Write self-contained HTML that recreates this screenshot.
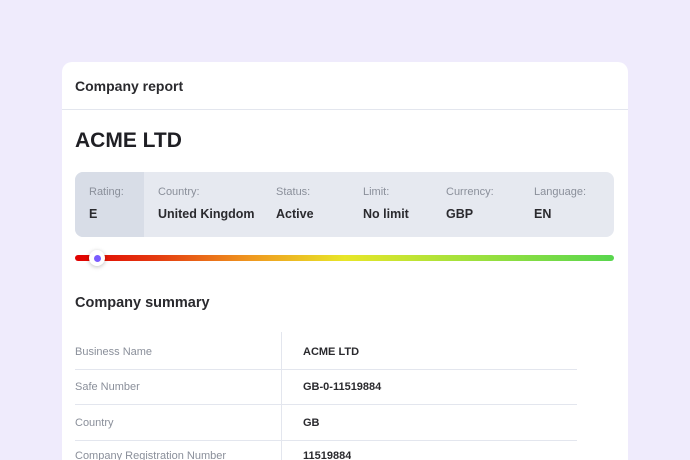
<!DOCTYPE html><html><head><style>
*{margin:0;padding:0;box-sizing:border-box}
html,body{width:690px;height:460px;overflow:hidden}
body{background:#efebfc;font-family:"Liberation Sans",sans-serif;position:relative;color:#222}
.card{position:absolute;left:62px;top:62px;width:566px;height:398px;background:#fff;border-radius:10px 10px 0 0;overflow:hidden}
.abs{position:absolute;white-space:nowrap}
.lbl{font-size:11px;color:#8a8f9a}
.val{font-size:12.5px;font-weight:bold;color:#2a2a2e}
.tl{font-size:11px;color:#8a8f9a}
.tv{font-size:11px;font-weight:bold;color:#2a2a2e}
</style></head><body>
<div class="card">
<div class="abs" style="left:13px;top:16px;font-size:14px;font-weight:bold;color:#2a2a2e">Company report</div>
<div class="abs" style="left:0;top:47px;width:566px;height:1px;background:#e3e6ee"></div>
<div class="abs" style="left:13px;top:67px;font-size:21px;font-weight:bold;color:#1f1f24">ACME LTD</div>
<div class="abs" style="left:13px;top:110px;width:539px;height:65px;background:#e6e9f0;border-radius:8px;overflow:hidden">
<div style="position:absolute;left:0;top:0;width:69px;height:65px;background:#d8dde7"></div>
</div>
<div class="abs lbl" style="left:27px;top:124px">Rating:</div><div class="abs val" style="left:27px;top:145px">E</div>
<div class="abs lbl" style="left:96px;top:124px">Country:</div><div class="abs val" style="left:96px;top:145px">United Kingdom</div>
<div class="abs lbl" style="left:214px;top:124px">Status:</div><div class="abs val" style="left:214px;top:145px">Active</div>
<div class="abs lbl" style="left:301px;top:124px">Limit:</div><div class="abs val" style="left:301px;top:145px">No limit</div>
<div class="abs lbl" style="left:384px;top:124px">Currency:</div><div class="abs val" style="left:384px;top:145px">GBP</div>
<div class="abs lbl" style="left:472px;top:124px">Language:</div><div class="abs val" style="left:472px;top:145px">EN</div>
<div class="abs" style="left:13px;top:193px;width:539px;height:6px;border-radius:3px;background:linear-gradient(90deg,#e10000 0%,#e43a10 15%,#ef9a20 33%,#e8e628 50%,#a9e23a 70%,#58d64e 100%)"></div>
<div class="abs" style="left:27px;top:188px;width:16px;height:16px;border-radius:50%;background:#fff;box-shadow:0 1px 4px rgba(0,0,0,.25)"></div>
<div class="abs" style="left:32px;top:193px;width:7px;height:7px;border-radius:50%;background:#7a5cff"></div>
<div class="abs" style="left:13px;top:233px;font-size:14.5px;font-weight:bold;color:#2a2a2e">Company summary</div>
<div class="abs" style="left:219px;top:270px;width:1px;height:128px;background:#e3e6ee"></div>
<div class="abs" style="left:13px;top:307px;width:502px;height:1px;background:#e3e6ee"></div>
<div class="abs" style="left:13px;top:342px;width:502px;height:1px;background:#e3e6ee"></div>
<div class="abs" style="left:13px;top:378px;width:502px;height:1px;background:#e3e6ee"></div>
<div class="abs tl" style="left:13px;top:284px">Business Name</div><div class="abs tv" style="left:241px;top:284px">ACME LTD</div>
<div class="abs tl" style="left:13px;top:319px">Safe Number</div><div class="abs tv" style="left:241px;top:319px">GB-0-11519884</div>
<div class="abs tl" style="left:13px;top:355px">Country</div><div class="abs tv" style="left:241px;top:355px">GB</div>
<div class="abs tl" style="left:13px;top:388px;height:10px;overflow:hidden">Company Registration Number</div><div class="abs tv" style="left:241px;top:388px;height:10px;overflow:hidden">11519884</div>
</div>
</body></html>
